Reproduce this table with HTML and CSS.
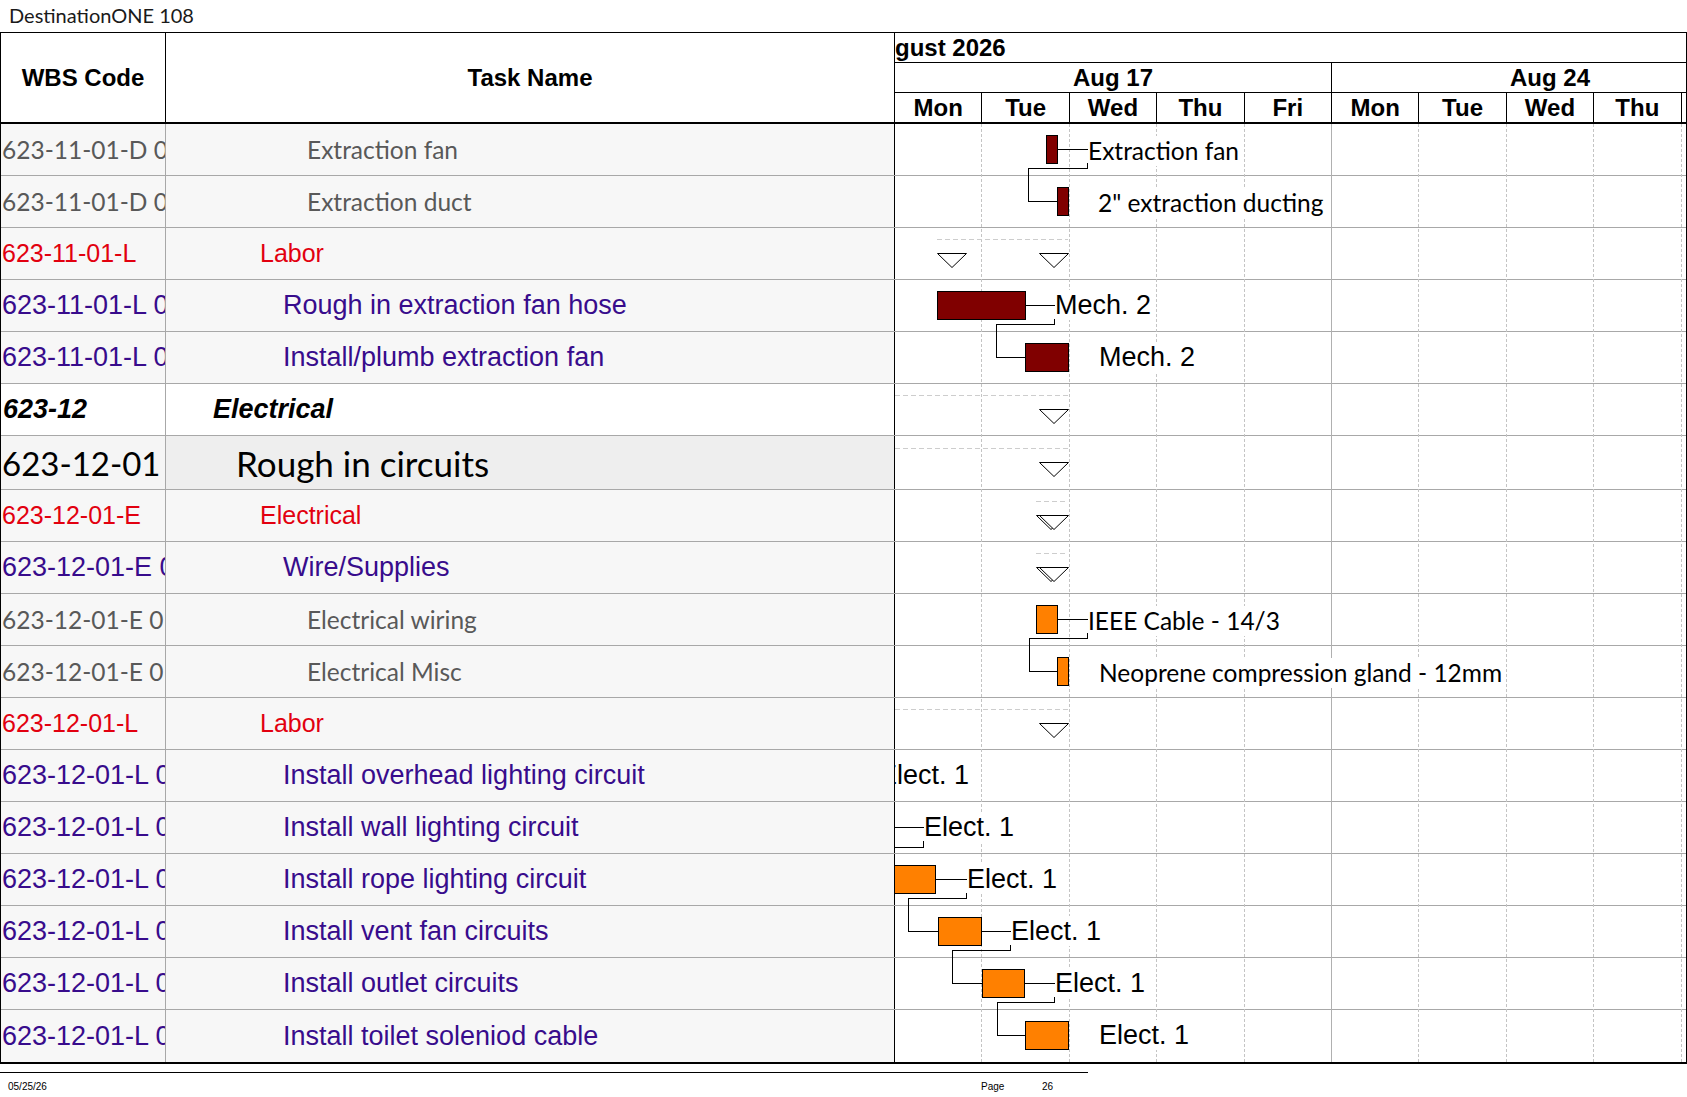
FILE: index.html
```html
<!DOCTYPE html>
<html lang="en">
<head>
<meta charset="utf-8">
<title>DestinationONE 108 – Gantt</title>
<link rel="stylesheet" href="styles.css">
</head>
<body>
<div class="doc-title">DestinationONE 108</div>

<div class="gantt">
  <div class="head">
    <div class="head-cell">WBS Code</div>
    <div class="head-cell">Task Name</div>
    <div class="timescale">
      <div class="ts-month"><span>August 2026</span></div>
      <div class="ts-weeks">
        <div class="week">Aug 17</div>
        <div class="week">Aug 24</div>
      </div>
      <div class="ts-days">
        <div class="day">Mon</div><div class="day">Tue</div><div class="day">Wed</div><div class="day">Thu</div><div class="day">Fri</div>
        <div class="day">Mon</div><div class="day">Tue</div><div class="day">Wed</div><div class="day">Thu</div><div class="day">Fri</div>
      </div>
    </div>
  </div>

  <div class="body">
    <div class="row task"><div class="wbs">623-11-01-D 0101</div><div class="name">Extraction fan</div><div class="cal"></div></div>
    <div class="row task"><div class="wbs">623-11-01-D 0102</div><div class="name">Extraction duct</div><div class="cal"></div></div>
    <div class="row grp"><div class="wbs">623-11-01-L</div><div class="name">Labor</div><div class="cal"></div></div>
    <div class="row item"><div class="wbs">623-11-01-L 0101</div><div class="name">Rough in extraction fan hose</div><div class="cal"></div></div>
    <div class="row item"><div class="wbs">623-11-01-L 0102</div><div class="name">Install/plumb extraction fan</div><div class="cal"></div></div>
    <div class="row l1"><div class="wbs">623-12</div><div class="name">Electrical</div><div class="cal"></div></div>
    <div class="row l2"><div class="wbs">623-12-01</div><div class="name">Rough in circuits</div><div class="cal"></div></div>
    <div class="row grp"><div class="wbs">623-12-01-E</div><div class="name">Electrical</div><div class="cal"></div></div>
    <div class="row item"><div class="wbs">623-12-01-E 01</div><div class="name">Wire/Supplies</div><div class="cal"></div></div>
    <div class="row task"><div class="wbs">623-12-01-E 0101</div><div class="name">Electrical wiring</div><div class="cal"></div></div>
    <div class="row task"><div class="wbs">623-12-01-E 0102</div><div class="name">Electrical Misc</div><div class="cal"></div></div>
    <div class="row grp"><div class="wbs">623-12-01-L</div><div class="name">Labor</div><div class="cal"></div></div>
    <div class="row item"><div class="wbs">623-12-01-L 0101</div><div class="name">Install overhead lighting circuit</div><div class="cal"></div></div>
    <div class="row item"><div class="wbs">623-12-01-L 0102</div><div class="name">Install wall lighting circuit</div><div class="cal"></div></div>
    <div class="row item"><div class="wbs">623-12-01-L 0103</div><div class="name">Install rope lighting circuit</div><div class="cal"></div></div>
    <div class="row item"><div class="wbs">623-12-01-L 0104</div><div class="name">Install vent fan circuits</div><div class="cal"></div></div>
    <div class="row item"><div class="wbs">623-12-01-L 0105</div><div class="name">Install outlet circuits</div><div class="cal"></div></div>
    <div class="row item last"><div class="wbs">623-12-01-L 0106</div><div class="name">Install toilet soleniod cable</div><div class="cal"></div></div>

    <div class="chart-layer">
      <div class="daygrid">
        <div class="dcol"></div><div class="dcol"></div><div class="dcol"></div><div class="dcol"></div><div class="dcol wk"></div>
        <div class="dcol"></div><div class="dcol"></div><div class="dcol"></div><div class="dcol"></div><div class="dcol"></div>
      </div>

      <svg class="plot" width="791" height="938" viewBox="0 0 791 938">
        <!-- summary spans -->
        <line class="span" x1="42" y1="115.5" x2="173" y2="115.5"/>
        <line class="span" x1="0" y1="271.5" x2="173" y2="271.5"/>
        <line class="span" x1="0" y1="324.5" x2="173" y2="324.5"/>
        <line class="span" x1="141" y1="377.5" x2="173" y2="377.5"/>
        <line class="span" x1="141" y1="429.5" x2="173" y2="429.5"/>
        <line class="span" x1="0" y1="585.5" x2="173" y2="585.5"/>

        <!-- summary markers -->
        <polygon class="tri" points="42.5,129.5 71.5,129.5 57,143.5"/>
        <polygon class="tri" points="144.5,129.5 173.5,129.5 159,143.5"/>
        <polygon class="tri" points="144.5,285.5 173.5,285.5 159,299.5"/>
        <polygon class="tri" points="144.5,338.5 173.5,338.5 159,352.5"/>
        <polygon class="tri" points="141.5,391.5 170.5,391.5 156,405.5"/>
        <polygon class="tri" points="144.5,391.5 173.5,391.5 159,405.5"/>
        <polygon class="tri" points="141.5,443.5 170.5,443.5 156,457.5"/>
        <polygon class="tri" points="144.5,443.5 173.5,443.5 159,457.5"/>
        <polygon class="tri" points="144.5,599.5 173.5,599.5 159,613.5"/>

        <!-- leader lines bar -> label -->
        <polyline class="link" points="162,25.5 193,25.5"/>
        <polyline class="link" points="130,181.5 160,181.5"/>
        <polyline class="link" points="162,495.5 193,495.5"/>
        <polyline class="link" points="-10,703.5 29,703.5"/>
        <polyline class="link" points="41,755.5 72,755.5"/>
        <polyline class="link" points="86,807.5 116,807.5"/>
        <polyline class="link" points="129,859.5 160,859.5"/>

        <!-- dependency connectors -->
        <polyline class="link" points="192.5,39 192.5,44.5 133.5,44.5 133.5,77.5 162,77.5"/>
        <polyline class="link" points="159.5,195 159.5,200.5 101.5,200.5 101.5,233.5 130,233.5"/>
        <polyline class="link" points="192.5,509 192.5,514.5 134.5,514.5 134.5,547.5 162,547.5"/>
        <polyline class="link" points="28.5,717 28.5,723.5 -10,723.5"/>
        <polyline class="link" points="71.5,769 71.5,774.5 13.5,774.5 13.5,807.5 43,807.5"/>
        <polyline class="link" points="115.5,821 115.5,826.5 57.5,826.5 57.5,859.5 87,859.5"/>
        <polyline class="link" points="159.5,873 159.5,878.5 102.5,878.5 102.5,911.5 130,911.5"/>

        <!-- task bars -->
        <rect class="bar mech" x="151.5" y="11.5" width="11" height="28"/>
        <rect class="bar mech" x="162.5" y="63.5" width="11" height="28"/>
        <rect class="bar mech" x="42.5" y="167.5" width="88" height="28"/>
        <rect class="bar mech" x="130.5" y="219.5" width="43" height="28"/>
        <rect class="bar elec" x="141.5" y="481.5" width="21" height="28"/>
        <rect class="bar elec" x="162.5" y="533.5" width="11" height="28"/>
        <rect class="bar elec" x="-2.5" y="741.5" width="43" height="28"/>
        <rect class="bar elec" x="43.5" y="793.5" width="43" height="28"/>
        <rect class="bar elec" x="87.5" y="845.5" width="42" height="28"/>
        <rect class="bar elec" x="130.5" y="897.5" width="43" height="28"/>
      </svg>

      <div class="lbl cb" style="left:193px;top:12px">Extraction fan</div>
      <div class="lbl cb" style="left:203px;top:64px">2" extraction ducting</div>
      <div class="lbl ar" style="left:160px;top:166px">Mech. 2</div>
      <div class="lbl ar" style="left:204px;top:218px">Mech. 2</div>
      <div class="lbl cb" style="left:193px;top:482px">IEEE Cable - 14/3</div>
      <div class="lbl cb" style="left:204px;top:534px">Neoprene compression gland - 12mm</div>
      <div class="lbl ar" style="left:-16px;top:636px">Elect. 1</div>
      <div class="lbl ar" style="left:29px;top:688px">Elect. 1</div>
      <div class="lbl ar" style="left:72px;top:740px">Elect. 1</div>
      <div class="lbl ar" style="left:116px;top:792px">Elect. 1</div>
      <div class="lbl ar" style="left:160px;top:844px">Elect. 1</div>
      <div class="lbl ar" style="left:204px;top:896px">Elect. 1</div>
    </div>
  </div>
</div>

<footer class="foot">
  <div class="foot-date">05/25/26</div>
  <div class="foot-page">Page</div>
  <div class="foot-num">26</div>
</footer>
</body>
</html>
```

FILE: styles.css
```css
* { box-sizing: border-box; }

body {
  margin: 0;
  background: #fff;
  color: #000;
  font-family: "Liberation Sans", Arial, sans-serif;
}

.doc-title {
  height: 32px;
  line-height: 30px;
  padding-left: 9px;
  font-family: Lato, "Liberation Sans", sans-serif;
  font-size: 20px;
  color: #1a1a1a;
  white-space: nowrap;
}

.gantt {
  width: 1687px;
  border: 1px solid #000;
  border-bottom-width: 2px;
}

/* ---------- header ---------- */
.head {
  display: grid;
  grid-template-columns: 165px 729px 791px;
  height: 91px;
}

.head-cell {
  display: flex;
  align-items: center;
  justify-content: center;
  border-right: 1px solid #000;
  border-bottom: 2px solid #000;
  font-weight: bold;
  font-size: 24px;
}

.timescale {
  display: flex;
  flex-direction: column;
  overflow: hidden;
  font-weight: bold;
  font-size: 24px;
  white-space: nowrap;
}

.ts-month {
  height: 30px;
  line-height: 29px;
  border-bottom: 1px solid #000;
}
.ts-month span { margin-left: -32px; }

.ts-weeks {
  display: flex;
  height: 30px;
  line-height: 29px;
  border-bottom: 1px solid #000;
}
.week {
  flex: 0 0 437px;
  text-align: center;
  border-right: 1px solid #000;
}

.ts-days {
  display: flex;
  height: 31px;
  line-height: 29px;
  border-bottom: 2px solid #000;
}
.day {
  flex: 0 0 87.4px;
  text-align: center;
  border-right: 1px solid #000;
}

/* ---------- rows ---------- */
.body { position: relative; }

.row {
  display: grid;
  grid-template-columns: 165px 729px 791px;
  height: 52px;
  border-bottom: 1px solid #a8a8a8;
}
.row.l2 { height: 54px; }
.row.last { border-bottom: 0; }

.wbs, .name {
  display: flex;
  align-items: center;
  overflow: hidden;
  white-space: nowrap;
  background: #f7f7f7;
}
.wbs { border-right: 1px solid #a8a8a8; padding-left: 1px; }
.name { border-right: 1px solid #000; }
.cal { background: #fff; }

/* detail task rows (grey, Calibri-like) */
.row.task .wbs, .row.task .name {
  font-family: Lato, "Liberation Sans", sans-serif;
  font-size: 24.5px;
  color: #595959;
}
.row.task .name { padding-left: 141px; }

/* group rows (red) */
.row.grp .wbs, .row.grp .name {
  font-size: 25px;
  color: #e2000f;
}
.row.grp .name { padding-left: 94px; }

/* item rows (purple) */
.row.item .wbs, .row.item .name {
  font-size: 27px;
  color: #380c8c;
}
.row.item .name { padding-left: 117px; }

/* level 1 summary */
.row.l1 .wbs, .row.l1 .name {
  background: #fff;
  font-size: 27px;
  font-weight: bold;
  font-style: italic;
}
.row.l1 .wbs { padding-left: 2px; }
.row.l1 .name { padding-left: 47px; }

/* level 2 summary */
.row.l2 .wbs, .row.l2 .name {
  font-family: Lato, "Liberation Sans", sans-serif;
  font-size: 35px;
}
.row.l2 .wbs { background: #f5f5f5; font-size: 33px; }
.row.l2 .name { background: #eeeeee; padding-left: 70px; }

/* ---------- chart canvas ---------- */
.chart-layer {
  position: absolute;
  top: 0;
  left: 894px;
  width: 791px;
  height: 100%;
  overflow: hidden;
}

.daygrid {
  position: absolute;
  inset: 0;
  display: flex;
}
.dcol {
  flex: 0 0 87.4px;
  border-right: 1px dashed #c4c4c4;
}
.dcol.wk { border-right: 1px solid #b0b0b0; }

.plot {
  position: absolute;
  left: 0;
  top: 0;
  overflow: visible;
}

.span {
  stroke: #cdcdcd;
  stroke-width: 1;
  stroke-dasharray: 5 3;
  shape-rendering: crispEdges;
}
.tri {
  fill: #fff;
  stroke: #000;
  stroke-width: 1;
}
.link {
  fill: none;
  stroke: #000;
  stroke-width: 1;
  shape-rendering: crispEdges;
}
.bar {
  stroke: #000;
  stroke-width: 1;
  shape-rendering: crispEdges;
}
.bar.mech { fill: #800000; }
.bar.elec { fill: #ff8000; }

.lbl {
  position: absolute;
  height: 30px;
  line-height: 30px;
  padding-right: 3px;
  white-space: nowrap;
  background: #fff;
  color: #000;
}
.lbl.ar { font-family: "Liberation Sans", Arial, sans-serif; font-size: 27px; }
.lbl.cb { font-family: Lato, "Liberation Sans", sans-serif; font-size: 24.5px; }

/* ---------- footer ---------- */
.foot {
  width: 1088px;
  margin-top: 8px;
  border-top: 1px solid #000;
  display: grid;
  grid-template-columns: 981px 61px auto;
  padding-top: 8px;
  font-size: 10px;
  line-height: 12px;
  color: #000;
}
.foot-date { padding-left: 8px; }
```
